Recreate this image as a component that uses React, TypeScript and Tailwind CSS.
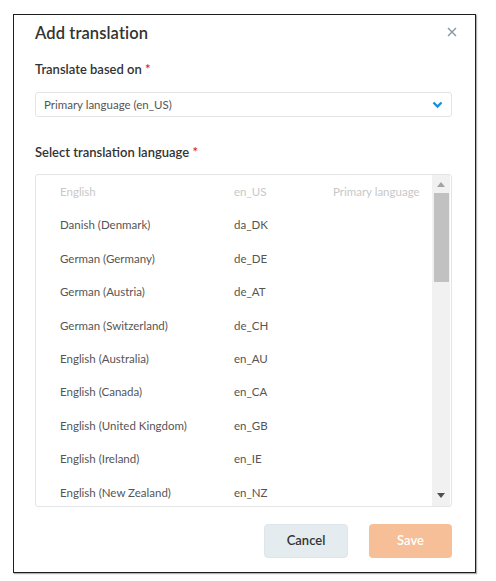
import React from "react";

const rows: [string, string, string?][] = [
  ["English", "en_US", "Primary language"],
  ["Danish (Denmark)", "da_DK"],
  ["German (Germany)", "de_DE"],
  ["German (Austria)", "de_AT"],
  ["German (Switzerland)", "de_CH"],
  ["English (Australia)", "en_AU"],
  ["English (Canada)", "en_CA"],
  ["English (United Kingdom)", "en_GB"],
  ["English (Ireland)", "en_IE"],
  ["English (New Zealand)", "en_NZ"],
];

export default function App() {
  return (
    <div className="w-[496px] h-[581px] bg-white pt-[14px] pl-[13px]" style={{ fontFamily: "Lato, 'Open Sans', sans-serif" }}>
      <div className="w-[463px] h-[559px] border-[1.5px] border-[#1e1e1e] shadow-[1px_1px_1px_rgba(0,0,0,0.3)] bg-white pl-[21px] pr-[22px] pt-[7px] relative">
        <div className="flex items-center justify-between h-[22px]">
          <div className="text-[16.5px] font-semibold text-[#333] tracking-[0.1px]">Add translation</div>
          <svg width="10" height="10" viewBox="0 0 10 10" className="mr-[-4px] mt-[-3px]">
            <path d="M1 1 L9 9 M9 1 L1 9" stroke="#8a96a0" strokeWidth="1.4" />
          </svg>
        </div>
        <div className="mt-[17px] text-[13px] font-semibold text-[#333] leading-[16px]">
          Translate based on <span className="text-[#e0262e]">*</span>
        </div>
        <div className="mt-[15px] h-[25px] w-[417px] border border-[#e2e4e6] rounded-[3px] flex items-center justify-between pl-[8px] pr-[8px]">
          <span className="text-[11.5px] text-[#555]">Primary language (en_US)</span>
          <svg width="11" height="8" viewBox="0 0 11 8">
            <path d="M1.5 1.5 L5.5 5.5 L9.5 1.5" stroke="#1a8fd6" strokeWidth="2.4" fill="none" />
          </svg>
        </div>
        <div className="mt-[27px] text-[13px] font-semibold text-[#333] leading-[16px]">
          Select translation language <span className="text-[#e0262e]">*</span>
        </div>
        <div className="mt-[14px] h-[333px] w-[417px] border border-[#e2e4e6] rounded-[3px] flex">
          <div className="flex-1 grid grid-rows-[repeat(10,33.4px)] content-start pl-[24px] pt-[0px]">
            {rows.map(([name, code, note], i) => (
              <div key={code} className={`flex items-center text-[11.5px] ${i === 0 ? "text-[#c8c8c8]" : "text-[#555]"}`}>
                <span className="w-[174px]">{name}</span>
                <span className="w-[99px]">{code}</span>
                <span>{note}</span>
              </div>
            ))}
          </div>
          <div className="w-[18px] bg-[#f1f1f1] flex flex-col items-center mr-[1px]">
            <div className="h-[18px] flex items-center justify-center">
              <svg width="8" height="5" viewBox="0 0 8 5"><path d="M0 5 L4 0 L8 5 Z" fill="#a3a3a3" /></svg>
            </div>
            <div className="w-[15px] h-[89px] bg-[#c1c1c1]" />
            <div className="flex-1" />
            <div className="h-[22px] flex items-center justify-center">
              <svg width="8" height="5" viewBox="0 0 8 5"><path d="M0 0 L8 0 L4 5 Z" fill="#505050" /></svg>
            </div>
          </div>
        </div>
        <div className="mt-[17px] flex justify-end gap-[21px] w-[417px]">
          <button className="w-[84px] h-[34px] rounded-[4px] bg-[#e5ecef] border border-[#dde5ea] text-[13px] font-semibold text-[#333]">Cancel</button>
          <button className="w-[83px] h-[34px] rounded-[4px] bg-[#f7bf97] text-[13px] font-semibold text-white">Save</button>
        </div>
      </div>
    </div>
  );
}
